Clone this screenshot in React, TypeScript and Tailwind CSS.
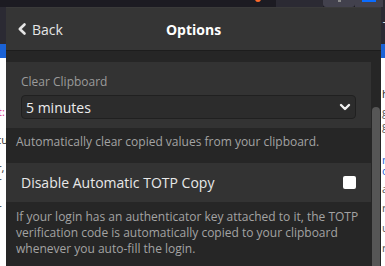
import React from "react";

const font = { fontFamily: '"Open Sans", "Noto Sans", sans-serif' };

function LeftSliver() {
  return (
    <div className="w-[6px] flex flex-col overflow-hidden bg-white">
      <div className="h-[37px] bg-[#2b2a33]" />
      <div className="h-[14px] bg-[#1a62d6]" />
      <div className="relative flex-1 text-[11px] leading-[14px] text-[#333]" style={font}>
        <div className="absolute left-[-2px] top-[47px] text-[#e0338a]">t:</div>
        <div className="absolute left-[-4px] top-[75px]">cu</div>
        <div className="absolute left-[-3px] top-[103px]">r,</div>
        <div className="absolute left-[-3px] top-[116px]">r</div>
        <div className="absolute left-[-3px] top-[143px]">r</div>
      </div>
    </div>
  );
}

function RightSliver() {
  return (
    <div className="w-[4px] flex flex-col overflow-hidden bg-white">
      <div className="relative h-[37px] bg-[#2b2a33] text-white text-[11px]" style={font}>
        <div className="absolute left-[2px] top-[11px]">T</div>
      </div>
      <div className="h-[14px] bg-[#1a62d6]" />
      <div className="relative flex-1 text-[11px] leading-[14px] text-[#555]" style={font}>
        <div className="absolute left-[1px] top-[29px] text-[#222]">h</div>
        <div className="absolute left-[1px] top-[47px]">g</div>
        <div className="absolute left-[1px] top-[61px]">g</div>
        <div className="absolute left-[1px] top-[95px] text-[#1a62d6]">n</div>
        <div className="absolute left-[1px] top-[106px] text-[#1a62d6]">o</div>
        <div className="absolute left-[1px] top-[124px]">a</div>
        <div className="absolute left-[1px] top-[143px]">r</div>
        <div className="absolute left-[1px] top-[163px]">u</div>
        <div className="absolute left-[1px] top-[183px]">r</div>
      </div>
    </div>
  );
}

function TopBar() {
  return (
    <div className="h-[7px] flex bg-[#1c1b22]">
      <div className="w-[255px]" />
      <div className="w-[6px] h-[3px] rounded-b-full bg-[#ff6a2b] mt-[-1px]" />
      <div className="w-[15px]" />
      <div className="w-[47px] bg-[#2b2a33]" />
      <div className="w-[32px] bg-[#42414d] rounded-b-[3px] flex justify-center">
        <div className="w-[3px] h-[2px] bg-[#8a8a8a]" />
      </div>
      <div className="w-[28px] bg-[#42414d] flex justify-center">
        <div className="w-[14px] h-[2px] bg-[#0a6cff]" />
      </div>
      <div className="flex-1 bg-[#2b2a33]" />
    </div>
  );
}

export default function App() {
  return (
    <div className="w-[385px] h-[266px] overflow-hidden flex flex-col bg-[#1c1b22]" style={font}>
      <TopBar />
      <div className="flex flex-1 min-h-0">
        <LeftSliver />
        <div className="w-[375px] flex flex-col bg-[#262626] border-t border-[#3a3a3a]">
          <div className="h-[43px] shrink-0 bg-[#353535] border-b border-[#1d1d1d] flex items-center relative">
            <div className="flex items-center pl-[10px] text-[#e6e6e6] text-[14px]">
              <svg width="12" height="14" viewBox="0 0 12 14" className="mr-[4px]">
                <path d="M8.5 2.5 L3.8 7 L8.5 11.5" stroke="#e6e6e6" strokeWidth="2.6" fill="none" strokeLinecap="round" strokeLinejoin="round" />
              </svg>
              <span>Back</span>
            </div>
            <div className="absolute inset-0 flex items-center justify-center text-[14px] font-bold text-white pointer-events-none">
              Options
            </div>
          </div>
          <div className="flex flex-1 min-h-0">
            <div className="w-[365px] pt-[11px] flex flex-col">
              <div className="bg-[#333333] px-[15px] pt-[11px] pb-[9px] flex flex-col">
                <div className="text-[12px] leading-[17px] text-[#9b9b9b]">Clear Clipboard</div>
                <div className="mt-[5px] h-[24px] rounded-[4px] border border-[#202020] bg-[#2c2c2c] flex items-center justify-between pl-[4px] pr-[4px]">
                  <span className="text-[14px] text-[#ececec]">5 minutes</span>
                  <svg width="12" height="10" viewBox="0 0 12 10">
                    <path d="M2 3 L6 7 L10 3" stroke="#f0f0f0" strokeWidth="2.4" fill="none" strokeLinecap="round" strokeLinejoin="round" />
                  </svg>
                </div>
              </div>
              <div className="px-[10px] pt-[6px] pb-[12px] text-[12px] leading-[16px] text-[#a3a3a3]">
                Automatically clear copied values from your clipboard.
              </div>
              <div className="bg-[#333333] h-[40px] border-t border-[#262626] px-[15px] flex items-center justify-between">
                <span className="text-[14px] text-[#e8e8e8]">Disable Automatic TOTP Copy</span>
                <div className="w-[13px] h-[13px] rounded-[2px] bg-white" />
              </div>
              <div className="px-[10px] pt-[7px] text-[12px] leading-[16px] text-[#a3a3a3]">
                If your login has an authenticator key attached to it, the TOTP verification code is automatically copied to your clipboard whenever you auto-fill the login.
              </div>
            </div>
            <div className="w-[10px] flex flex-col">
              <div className="h-[56px]" />
              <div className="flex-1 mx-[1px] rounded-t-[5px] bg-[#565656]" />
            </div>
          </div>
        </div>
        <RightSliver />
      </div>
    </div>
  );
}
